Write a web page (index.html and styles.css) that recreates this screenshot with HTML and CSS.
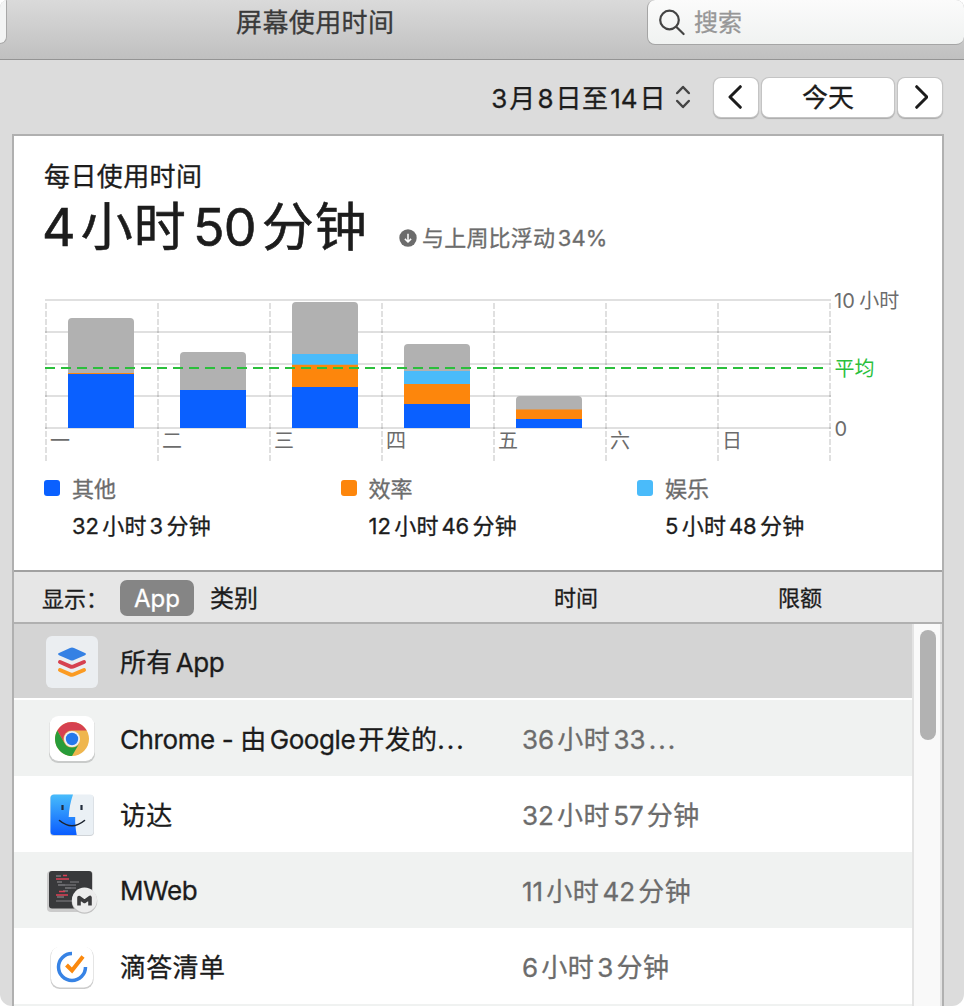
FILE: index.html
```html
<!DOCTYPE html>
<html lang="zh-CN">
<head>
<meta charset="utf-8">
<title>屏幕使用时间</title>
<link rel="stylesheet" href="styles.css">
</head>
<body>
<div class="window">
  <header class="titlebar">
    <div class="back-edge"></div>
    <h1 class="title">屏幕使用时间</h1>
    <div class="search">
      <svg class="search-icon" width="28" height="28" viewBox="0 0 28 28"><circle cx="11.5" cy="12" r="9.3"/><path d="M18.2 18.8 25.6 26"/></svg>
      <span class="placeholder">搜索</span>
    </div>
  </header>

  <div class="toolbar">
    <span class="range"><span class="n first">3</span>月<span class="n">8</span>日至<span class="n">14</span>日</span>
    <svg class="stepper" width="16" height="24" viewBox="0 0 16 24"><path d="M2.2 8 8 2l5.800 6M2.200 16 8 22l5.800-6"/></svg>
    <div class="button arrow"><svg width="16" height="26" viewBox="0 0 16 26"><path d="M12.300 2.700 2 13l10.300 10.300"/></svg></div>
    <div class="button today"><span>今天</span></div>
    <div class="button arrow"><svg width="16" height="26" viewBox="0 0 16 26"><path d="M4.700 2.700 15 13 4.700 23.300"/></svg></div>
  </div>

  <main class="panel">
    <section class="summary">
      <h2 class="caption">每日使用时间</h2>
      <div class="headline">
        <div class="total"><span class="n first">4</span>小时<span class="n">50</span>分钟</div>
        <div class="trend">
          <svg width="18" height="18" viewBox="0 0 18 18"><circle cx="9" cy="9" r="8.700" fill="#6c6c6c"/><path d="M9 4.800v8M5.900 9.900 9 13l3.100-3.100" fill="none" stroke="#fff" stroke-width="1.500"/></svg>
          <span>与上周比浮动<span class="n">34%</span></span>
        </div>
      </div>

      <svg class="chart" width="870" height="170" viewBox="44 295 870 170">
        <g class="grid">
          <path d="M45 300H831M45 332H831M45 364H831M45 396H831M45 428H831"/>
          <path stroke-dasharray="6 2" d="M46 303V461M158 303V461M270 303V461M382 303V461M494 303V461M606 303V461M718 303V461M830 303V461"/>
        </g>
        <g class="other">
          <path d="M68 374V322q0-4 4-4h58q4 0 4 4v52z"/>
          <path d="M180 390V356q0-4 4-4h58q4 0 4 4v34z"/>
          <path d="M292 354V306q0-4 4-4h58q4 0 4 4v48z"/>
          <path d="M404 371V348q0-4 4-4h58q4 0 4 4v23z"/>
          <path d="M516 410V400q0-4 4-4h58q4 0 4 4v10z"/>
        </g>
        <path class="fun" d="M292 354h66v11h-66zM404 371h66v13h-66z"/>
        <path class="work" d="M68 373h66v1h-66zM292 364.700h66V387h-66zM404 384h66v20h-66zM516 409.500h66v9.500h-66z"/>
        <path class="misc" d="M68 374h66v54H68zM180 390h66v38h-66zM292 387h66v41h-66zM404 404h66v24h-66zM516 419h66v9h-66z"/>
        <path class="average" d="M45 368H823"/>
        <g class="axis">
          <text x="50" y="448">一</text><text x="162" y="448">二</text><text x="274" y="448">三</text>
          <text x="386" y="448">四</text><text x="498" y="448">五</text><text x="610" y="448">六</text><text x="722" y="448">日</text>
          <text x="834" y="308">10<tspan dx="4.500">小时</tspan></text>
          <text class="average-label" x="834.500" y="376">平均</text>
          <text x="834.500" y="436">0</text>
        </g>
      </svg>

      <div class="legend">
        <div class="entry"><i class="swatch blue"></i><span class="name">其他</span><span class="value"><span class="n first">32</span>小时<span class="n">3</span>分钟</span></div>
        <div class="entry"><i class="swatch orange"></i><span class="name">效率</span><span class="value"><span class="n first">12</span>小时<span class="n">46</span>分钟</span></div>
        <div class="entry"><i class="swatch sky"></i><span class="name">娱乐</span><span class="value"><span class="n first">5</span>小时<span class="n">48</span>分钟</span></div>
      </div>
    </section>

    <div class="columns">
      <div class="filter"><span class="show">显示：</span><span class="pill">App</span><span class="category">类别</span></div>
      <span class="col-time">时间</span>
      <span class="col-limit">限额</span>
    </div>

    <div class="list">
      <div class="rows">
        <div class="row selected">
          <svg class="icon" viewBox="0 0 52 52"><rect width="52" height="52" rx="6" fill="#ebeef1"/><path d="M13 17 24 12q2-1 4 0l11 5q2 1 0 2.200L28 24q-2 1-4 0l-11-4.800q-2-1.200 0-2.200z" fill="#3581e4"/><path d="m14 26 10 4.300q2 .9 4 0L38 26" fill="none" stroke="#d64150" stroke-width="4" stroke-linecap="round"/><path d="m14 34 10 4.300q2 .9 4 0L38 34" fill="none" stroke="#fb9b22" stroke-width="4" stroke-linecap="round"/></svg>
          <span class="app">所有<span class="n latin">App</span></span>
        </div>
        <div class="row">
          <svg class="icon" viewBox="0 0 52 52"><rect x="3" y="4" width="46" height="46" rx="9" fill="#c9cbca"/><rect x="3.500" y="3" width="45" height="45" rx="9" fill="#fff"/><circle cx="26" cy="26" r="17" fill="#efb64e"/><path d="M11.300 17.500A17 17 0 0 1 40.700 17.500H26a8.500 8.500 0 0 0-7.400 12.800z" fill="#d64150"/><path d="M11.300 17.500A17 17 0 0 0 26 43l7.400-12.800a8.500 8.500 0 0 1-14.800 0z" fill="#289c3a"/><circle cx="26" cy="26" r="8" fill="#eef0f3"/><circle cx="26" cy="26" r="6.200" fill="#2678ea"/></svg>
          <span class="app"><span class="latin">Chrome - </span>由<span class="n latin">Google</span>开发的<span class="dots">...</span></span>
          <span class="time"><span class="n first">36</span>小时<span class="n">33</span><span class="dots">...</span></span>
        </div>
        <div class="row">
          <svg class="icon" viewBox="0 0 52 52"><defs><linearGradient id="sky" x2="0" y2="1"><stop stop-color="#48bcfb"/><stop offset="1" stop-color="#0a5cff"/></linearGradient></defs><rect x="4" y="6" width="44" height="41" rx="4" fill="#cfd3d7"/><rect x="4.500" y="5.500" width="43" height="40.500" rx="3.500" fill="#eaf0f5"/><path d="M8 5.500h19c-2.500 7-4 15-4.300 22.500h6.500c-.2 6 .4 12 1.500 18H8q-3.500 0-3.500-3.500V9q0-3.500 3.500-3.500z" fill="url(#sky)"/><path d="M16.500 16v5M35.500 16v5" stroke="#222d3c" stroke-width="2.200"/><path d="M13.500 31.500q12.500 10.500 25 0" fill="none" stroke="#1d2430" stroke-width="1.600" stroke-linecap="round"/></svg>
          <span class="app">访达</span>
          <span class="time"><span class="n first">32</span>小时<span class="n">57</span>分钟</span>
        </div>
        <div class="row">
          <svg class="icon" viewBox="0 0 52 52"><rect x="1" y="6" width="46" height="41" rx="4" fill="#cbcbcb"/><rect x="3" y="6" width="43" height="37.500" rx="3" fill="#38393b"/><path d="M10 11h5M11 17h5M12 20h7M19 23h6M17 26h5M11 32h7" stroke="#77777a" stroke-width="1.500"/><path d="M17 10.500h4M10 14h13M13 26.500h6M10 30h12" stroke="#db4055" stroke-width="1.600"/><path d="M24 17h9M13 20h17M22 23h8M10 36h16" stroke="#6a6a6d" stroke-width="1.400"/><circle cx="38.500" cy="36" r="12.800" fill="#c2c2c2"/><circle cx="38.500" cy="35" r="12.500" fill="#ececec"/><path d="M33 40.500v-8l5.500 4 5.500-4v8" fill="none" stroke="#3b3b3d" stroke-width="3.600" stroke-linejoin="round"/></svg>
          <span class="app latin">MWeb</span>
          <span class="time"><span class="n first">11</span>小时<span class="n">42</span>分钟</span>
        </div>
        <div class="row">
          <svg class="icon" viewBox="0 0 52 52"><rect x="4.500" y="6" width="43" height="42" rx="9" fill="#ccc"/><rect x="5" y="5.500" width="42" height="41" rx="9" fill="#fff"/><path d="M26 12.500A13.500 13.500 0 1 0 39.500 26" fill="none" stroke="#3783e5" stroke-width="3.500"/><path d="m20.500 24 5.500 5.500L37 15.500" fill="none" stroke="#fb890e" stroke-width="4"/></svg>
          <span class="app">滴答清单</span>
          <span class="time"><span class="n first">6</span>小时<span class="n">3</span>分钟</span>
        </div>
        <div class="row"></div>
      </div>
      <div class="scrollbar"><div class="thumb"></div></div>
    </div>
  </main>
</div>
</body>
</html>
```
FILE: styles.css
```css
* { box-sizing: border-box; }
body {
  margin: 0;
  background: #fff;
  font-family: Inter, "Noto Sans CJK SC", sans-serif;
  color: #1c1c1c;
  -webkit-text-stroke: .3px;
}
h1, h2 { margin: 0; font-weight: 400; }
.window {
  width: 964px;
  height: 1006px;
  display: flex;
  flex-direction: column;
  overflow: hidden;
  background: #dcdcdc;
  border-radius: 8px 8px 12px 12px;
}
.n { margin: 0 .12em; letter-spacing: 0; }
.n.first { margin-left: 0; }

.titlebar {
  flex: none;
  height: 60px;
  display: flex;
  align-items: flex-start;
  background: linear-gradient(#dadada, #c0c0c0);
  border-bottom: 1px solid #949494;
}
.back-edge {
  width: 7px;
  height: 44px;
  background: #f3f4f4;
  border: solid #a8a8a8;
  border-width: 0 1px 1px 0;
  border-radius: 0 0 8px 0;
}
.title {
  width: 640px;
  padding-left: 229px;
  font-size: 26px;
  line-height: 46px;
  letter-spacing: .4px;
  color: #3a3a3a;
}
.search {
  flex: 1;
  height: 45px;
  display: flex;
  align-items: center;
  gap: 8px;
  padding-left: 10px;
  background: linear-gradient(#fbfbfb, #f0f2f1);
  border: 1px solid #a5a5a5;
  border-width: 0 0 1px 1px;
  border-radius: 8px;
  font-size: 24px;
  color: #979797;
}
.search-icon { fill: none; stroke: #444; stroke-width: 2.200; stroke-linecap: round; }
.placeholder { padding-bottom: 4px; }

.toolbar {
  flex: none;
  height: 74px;
  display: flex;
  align-items: center;
  justify-content: flex-end;
  padding: 0 22px 0 0;
  font-size: 26px;
}
.range { letter-spacing: .5px; margin-right: 9px; padding-bottom: 2px; }
.range .n { margin: 0 .07em; }
.stepper { margin-right: 23px; fill: none; stroke: #444; stroke-width: 2.500; stroke-linecap: round; stroke-linejoin: round; }
.button {
  height: 39px;
  display: flex;
  align-items: center;
  justify-content: center;
  background: #fff;
  border-radius: 7px;
  box-shadow: 0 0 0 1px #c4c4c4, 0 1px 1px 1px #aaa;
}
.arrow { width: 44px; }
.arrow svg { fill: none; stroke: #1c1c1c; stroke-width: 3; stroke-linecap: round; stroke-linejoin: round; }
.today { width: 132px; margin: 0 4px; padding-bottom: 3px; }

.panel {
  flex: 1;
  display: flex;
  flex-direction: column;
  margin: 0 20px 0 12px;
  background: #fff;
  border: solid #b0b0b0;
  border-width: 2px 2px 0;
}
.summary { height: 434px; padding: 22px 0 0 30px; }
.caption { font-size: 26px; line-height: 38px; letter-spacing: .4px; }
.headline { display: flex; height: 62px; }
.total { width: 355px; font-size: 52px; line-height: 64px; letter-spacing: 1px; white-space: nowrap; -webkit-text-stroke: .6px; }
.total .n { letter-spacing: -1px; }
.total .first { margin-left: -2px; }
.trend {
  display: flex;
  align-items: center;
  gap: 5px;
  padding-top: 22px;
  font-size: 22px;
  line-height: 32px;
  letter-spacing: .2px;
  color: #6c6c6c;
}
.chart { display: block; margin-top: 37px; overflow: visible; }
.grid { stroke: #000; stroke-opacity: .12; stroke-width: 2; fill: none; }
.other { fill: #b1b1b1; }
.fun { fill: #4abbfa; }
.work { fill: #fd860c; }
.misc { fill: #0a60ff; }
.average { stroke: #2bbf3c; stroke-width: 2; stroke-dasharray: 10 6; }
.axis { font-size: 20px; fill: #6c6c6c; -webkit-text-stroke: 0; }
.average-label { fill: #2bbf3c; }

.legend { display: grid; grid-template-columns: repeat(3, 296.500px); padding-top: 7px; }
.entry {
  display: grid;
  grid-template-columns: 28px 1fr;
  grid-template-rows: 32px 44px;
  align-items: center;
  font-size: 22px;
}
.swatch { width: 16px; height: 16px; border-radius: 3px; }
.blue { background: #0a60ff; }
.orange { background: #fd860c; }
.sky { background: #4abbfa; }
.name { color: #6c6c6c; padding-bottom: 3px; }
.value { grid-column: 2; padding-bottom: 4px; letter-spacing: .3px; }
.value .n { margin-right: .15em; }

.columns {
  height: 54px;
  display: grid;
  grid-template-columns: 540px 224px 1fr;
  align-items: center;
  background: #e6e6e6;
  border: solid #a1a1a1;
  border-width: 2px 0;
  border-bottom-color: #b0b0b0;
  font-size: 22px;
}
.filter { display: flex; align-items: center; padding-left: 28px; }
.show { width: 78px; padding-bottom: 1px; }
.pill {
  width: 74px;
  height: 36px;
  margin-top: 2px;
  border-radius: 7px;
  background: #858585;
  color: #fff;
  font-size: 24px;
  line-height: 38px;
  text-align: center;
}
.category { margin-left: 16px; font-size: 24px; padding-bottom: 1px; }
.col-time, .col-limit { padding-bottom: 2px; }

.list { flex: 1; min-height: 0; display: flex; overflow: hidden; }
.rows { width: 898px; }
.row {
  height: 76px;
  display: grid;
  grid-template-columns: 74px 402px 1fr;
  align-items: center;
  padding-left: 32px;
  font-size: 26px;
  letter-spacing: .3px;
}
.row:nth-child(even) { background: #f0f2f1; }
.selected { background: #d4d4d4; border-bottom: 2px solid #fff; }
.icon { width: 52px; height: 52px; margin-top: 1px; }
.app, .time { padding-bottom: 2px; }
.app.latin { padding-bottom: 0; }
.time { color: #6c6c6c; letter-spacing: .5px; }
.latin { letter-spacing: -.4px; }
.dots { letter-spacing: 2px; }
.scrollbar {
  width: 30px;
  padding: 6px 0 0 6px;
  background: #f9f9f9;
  border: solid #e3e3e3;
  border-width: 0 2px;
}
.thumb { width: 16px; height: 110px; border-radius: 8px; background: #b2b2b2; }
```
